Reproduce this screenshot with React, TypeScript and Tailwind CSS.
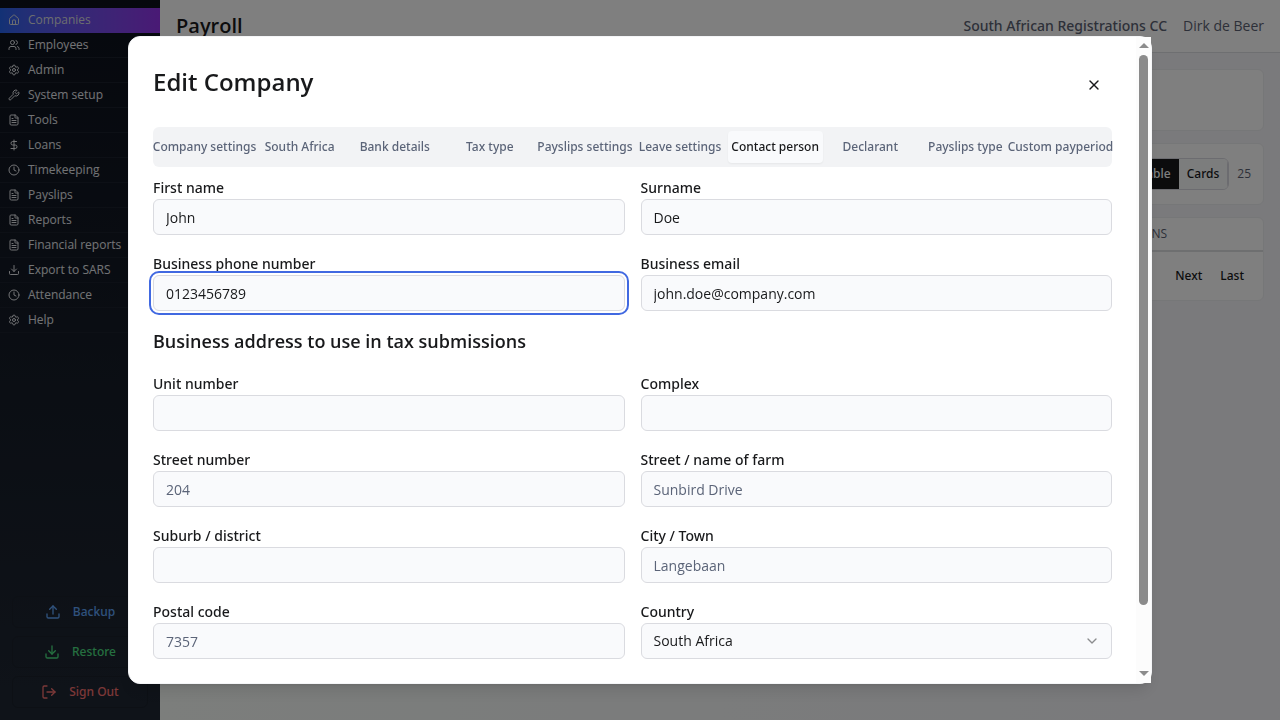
import type { ReactNode } from "react";
import { House, Users, Settings, Wrench, FileText, DollarSign, Clock, Download, Upload, LogOut, X, ChevronDown } from "lucide-react";
import type { LucideIcon } from "lucide-react";

const menu: { label: string; icon: LucideIcon }[] = [
  { label: "Companies", icon: House },
  { label: "Employees", icon: Users },
  { label: "Admin", icon: Settings },
  { label: "System setup", icon: Wrench },
  { label: "Tools", icon: FileText },
  { label: "Loans", icon: DollarSign },
  { label: "Timekeeping", icon: Clock },
  { label: "Payslips", icon: FileText },
  { label: "Reports", icon: FileText },
  { label: "Financial reports", icon: FileText },
  { label: "Export to SARS", icon: Download },
  { label: "Attendance", icon: Clock },
  { label: "Help", icon: Settings },
];

const tabs = [
  "Company settings",
  "South Africa",
  "Bank details",
  "Tax type",
  "Payslips settings",
  "Leave settings",
  "Contact person",
  "Declarant",
  "Payslips type",
  "Custom payperiod",
];

const medium = "font-['Noto_Sans',sans-serif] font-medium";
const control = "h-9 w-full rounded-md border border-[#dadbe0] bg-[#f9fafc] px-3 text-sm text-[#18191b]";

function Sidebar() {
  return (
    <aside className="flex w-40 shrink-0 flex-col bg-gradient-to-b from-[#0c111c] to-[#1f2733] pt-2 pb-3">
      <nav className="flex flex-col">
        {menu.map(({ label, icon: Icon }, i) => (
          <a
            key={label}
            href="#"
            className={
              "flex h-[25px] items-center gap-2 border-b px-2 text-xs whitespace-nowrap " +
              (i === 0
                ? "border-transparent bg-gradient-to-r from-[#2563eb] to-[#9333ea] bg-origin-border text-[#d9dbe0]"
                : "border-[#1a212d] text-[#e5e7eb]")
            }
          >
            <Icon size={12} strokeWidth={2} className="shrink-0" />
            {label}
          </a>
        ))}
      </nav>
      <div className="mt-auto flex flex-col gap-2 px-3">
        <SideButton color="text-[#60a5fa]" icon={<Upload size={16} />}>Backup</SideButton>
        <SideButton color="text-[#4ade80]" icon={<Download size={16} />}>Restore</SideButton>
        <SideButton color="text-[#f87171]" icon={<LogOut size={16} />}>Sign Out</SideButton>
      </div>
    </aside>
  );
}

function SideButton({ color, icon, children }: { color: string; icon: ReactNode; children: ReactNode }) {
  return (
    <button type="button" className={`flex h-8 items-center justify-center gap-3 rounded-md border border-[#1a212b] text-xs ${medium} ${color}`}>
      {icon}
      {children}
    </button>
  );
}

function Page() {
  return (
    <div className="flex min-h-screen">
      <Sidebar />
      <div className="flex min-w-0 flex-1 flex-col bg-gradient-to-r from-[#f8fcf9] to-[#f4f4f8]">
        <header className="flex h-[53px] items-center justify-between border-b border-[#dcdfe3] bg-white px-4">
          <h2 className="text-xl font-semibold text-[#18191b]">Payroll</h2>
          <div className="flex gap-4 text-sm text-[#5b6172]">
            <span className={medium}>South African Registrations CC</span>
            <span>Dirk de Beer</span>
          </div>
        </header>
        <main className="flex flex-col gap-3 p-4">
          <div className="h-[62px] rounded-md border border-[#eceef0] bg-white" />
          <div className="flex h-[62px] items-center justify-end gap-2 rounded-md border border-[#eceef0] bg-white px-3">
            <div className={`flex h-8 overflow-hidden rounded-md border border-[#d9d9e0] text-xs ${medium}`}>
              <button type="button" className="bg-[#18191b] px-2 text-white">Table</button>
              <button type="button" className="border-r border-[#d9d9e0] bg-[#f9fafb] px-2 text-[#18191b]">Cards</button>
            </div>
            <span className="text-xs text-[#5b6172]">25</span>
          </div>
          <div className="rounded-md border border-[#eceef0] bg-white">
            <div className="flex h-[34px] items-center justify-end border-b-2 border-[#dcdee0] pr-24 text-xs text-[#5b6172]">ACTIONS</div>
            <div className={`flex h-12 items-center justify-end gap-[18px] px-[19px] text-xs text-[#18191b] ${medium}`}>
              <button type="button">Next</button>
              <button type="button">Last</button>
            </div>
          </div>
        </main>
      </div>
    </div>
  );
}

function Label({ htmlFor, children }: { htmlFor: string; children: ReactNode }) {
  return (
    <label htmlFor={htmlFor} className={`text-sm leading-[22px] text-[#18191b] ${medium}`}>{children}</label>
  );
}

function Field({ id, label, value, placeholder, active, type = "text" }: { id: string; label: string; value?: string; placeholder?: string; active?: boolean; type?: string }) {
  return (
    <div className="flex flex-col">
      <Label htmlFor={id}>{label}</Label>
      <input
        id={id}
        type={type}
        defaultValue={value}
        placeholder={placeholder}
        className={control + " placeholder:text-[#5b6478] " + (active ? "outline-2 outline-offset-2 outline-[#4169e1]" : "outline-none")}
      />
    </div>
  );
}

function ScrollBar() {
  return (
    <div aria-hidden="true" className="flex w-[15px] shrink-0 flex-col items-center justify-between bg-[#fcfcfc] pt-[6px] pb-[7px]">
      <span className="border-x-[5px] border-b-[5px] border-x-transparent border-b-[#8b8b8b]" />
      <span className="mt-[7px] mb-[66px] w-[9px] flex-1 rounded-full bg-[#8b8b8b]" />
      <span className="border-x-[5px] border-t-[5px] border-x-transparent border-t-[#8b8b8b]" />
    </div>
  );
}

function EditCompany() {
  return (
    <div role="dialog" aria-modal="true" aria-labelledby="dialog-title" className="flex w-4/5 rounded-xl border border-[#f4f5f7] bg-white shadow-lg">
      <form className="min-w-0 flex-1 p-6">
        <div className="flex items-center justify-between">
          <h1 id="dialog-title" className="text-2xl leading-[42px] font-semibold text-[#18191b]">Edit Company</h1>
          <button type="button" aria-label="Close" className="grid h-9 w-9 place-items-center self-end text-[#18191b]">
            <X size={16} />
          </button>
        </div>
        <div role="tablist" className="mt-6 grid h-10 grid-cols-10 rounded-md bg-[#f2f3f5] p-1">
          {tabs.map((tab) => (
            <button
              key={tab}
              type="button"
              role="tab"
              aria-selected={tab === "Contact person"}
              className={
                `flex items-center justify-center rounded-sm text-xs whitespace-nowrap ${medium} ` +
                (tab === "Contact person" ? "bg-[#f9fafc] text-[#18191b] shadow-xs" : "text-[#5b6478]")
              }
            >
              {tab}
            </button>
          ))}
        </div>
        <div className="mt-[10px] grid grid-cols-2 gap-x-4 gap-y-[18px]">
          <Field id="first" label="First name" value="John" />
          <Field id="surname" label="Surname" value="Doe" />
          <Field id="phone" label="Business phone number" value="0123456789" type="tel" active />
          <Field id="email" label="Business email" value="john.doe@company.com" type="email" />
        </div>
        <h2 className="mt-4 text-lg leading-7 font-semibold text-[#18191b]">Business address to use in tax submissions</h2>
        <div className="mt-[18px] grid grid-cols-2 gap-x-4 gap-y-[18px]">
          <Field id="unit" label="Unit number" />
          <Field id="complex" label="Complex" />
          <Field id="street-number" label="Street number" placeholder="204" />
          <Field id="street" label="Street / name of farm" placeholder="Sunbird Drive" />
          <Field id="suburb" label="Suburb / district" />
          <Field id="city" label="City / Town" placeholder="Langebaan" />
          <Field id="postal" label="Postal code" placeholder="7357" />
          <div className="flex flex-col">
            <Label htmlFor="country">Country</Label>
            <div className="grid items-center">
              <select id="country" className={control + " col-start-1 row-start-1 appearance-none outline-none"}>
                <option>South Africa</option>
              </select>
              <ChevronDown size={16} className="pointer-events-none col-start-1 row-start-1 mr-3 justify-self-end text-[#8b8c8e]" />
            </div>
          </div>
        </div>
      </form>
      <ScrollBar />
    </div>
  );
}

export default function App() {
  return (
    <div className="font-['Open_Sans',sans-serif]">
      <Page />
      <div className="fixed inset-0 flex items-center justify-center bg-black/50">
        <EditCompany />
      </div>
    </div>
  );
}
